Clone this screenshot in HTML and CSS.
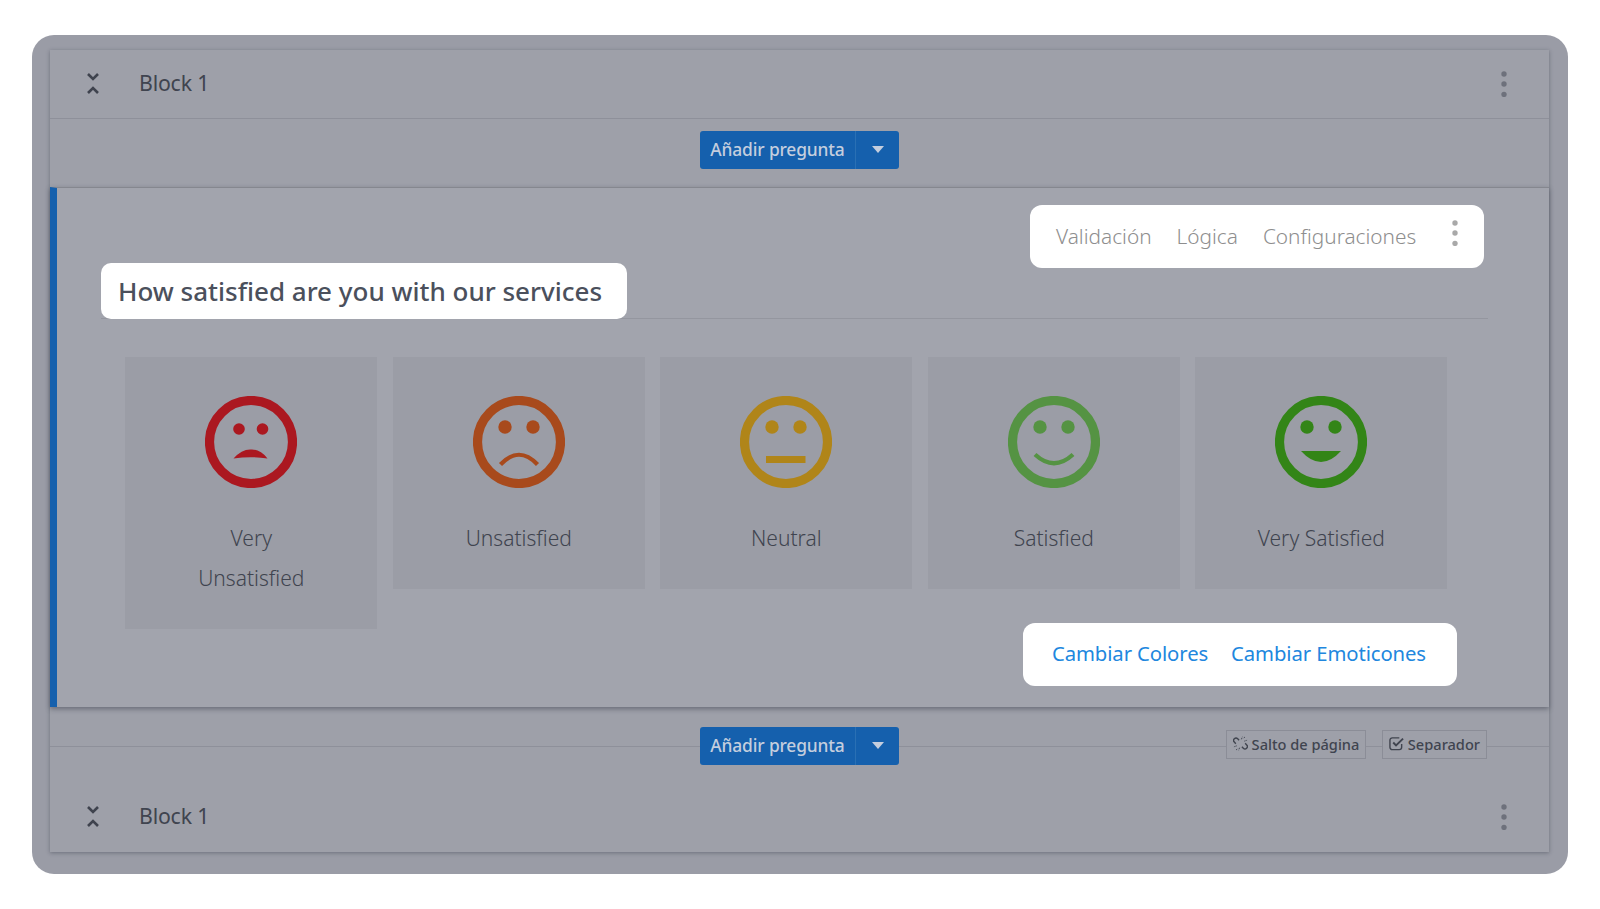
FILE: index.html
```html
<!DOCTYPE html>
<html lang="es">
<head>
<meta charset="utf-8">
<title>Block 1</title>
<link rel="stylesheet" href="styles.css">
</head>
<body>
<main class="frame">
  <section class="block">
    <header class="block-head">
      <svg class="collapse" viewBox="0 0 14 24"><path d="M2 2l5 5 5-5M2 21l5-5 5 5"/></svg>
      <span class="block-title">Block 1</span>
      <svg class="kebab" viewBox="0 0 6 26"><circle cx="3" cy="3" r="2.7"/><circle cx="3" cy="13" r="2.7"/><circle cx="3" cy="23.400" r="2.7"/></svg>
    </header>
    <div class="add-row add-top">
      <div class="split-btn"><span class="split-main">Añadir pregunta</span><span class="split-caret"></span></div>
    </div>
    <article class="question">
      <div class="actions-row">
        <nav class="actions">
          <span>Validación</span><span>Lógica</span><span>Configuraciones</span>
          <svg class="kebab kebab-light" viewBox="0 0 6 26"><circle cx="3" cy="3" r="2.7"/><circle cx="3" cy="13" r="2.7"/><circle cx="3" cy="23.400" r="2.7"/></svg>
        </nav>
      </div>
      <div class="title-row"><h2 class="q-title">How satisfied are you with our services</h2></div>
      <div class="faces">
        <div class="face-card">
          <svg class="face c1" viewBox="-46 -46 92 92"><circle class="ring" r="41.500"/><circle class="fill" cx="-12" cy="-13" r="5.800"/><circle class="fill" cx="11.500" cy="-13" r="5.800"/><path class="fill" d="M-17.500 16.500Q-9 7 0 7.500Q9 7 16.500 16.500Q0 14 -17.500 16.500Z"/></svg>
          <div class="face-label">Very<br>Unsatisfied</div>
        </div>
        <div class="face-card">
          <svg class="face c2" viewBox="-46 -46 92 92"><circle class="ring" r="41.500"/><circle class="fill" cx="-14" cy="-15" r="6.700"/><circle class="fill" cx="14" cy="-15" r="6.700"/><path class="line" d="M-18.500 22.500Q0 3 18.500 22.500"/></svg>
          <div class="face-label">Unsatisfied</div>
        </div>
        <div class="face-card">
          <svg class="face c3" viewBox="-46 -46 92 92"><circle class="ring" r="41.500"/><circle class="fill" cx="-14" cy="-15" r="6.700"/><circle class="fill" cx="14" cy="-15" r="6.700"/><rect class="fill" x="-20" y="14" width="39.500" height="7"/></svg>
          <div class="face-label">Neutral</div>
        </div>
        <div class="face-card">
          <svg class="face c4" viewBox="-46 -46 92 92"><circle class="ring" r="41.500"/><circle class="fill" cx="-14" cy="-15" r="6.700"/><circle class="fill" cx="14" cy="-15" r="6.700"/><path class="line" d="M-19 12.500Q0 30 19 12.500"/></svg>
          <div class="face-label">Satisfied</div>
        </div>
        <div class="face-card">
          <svg class="face c5" viewBox="-46 -46 92 92"><circle class="ring" r="41.500"/><circle class="fill" cx="-14" cy="-15" r="6.700"/><circle class="fill" cx="14" cy="-15" r="6.700"/><path class="fill" d="M-20 9H20Q10 20 0 20Q-10 20 -20 9Z"/></svg>
          <div class="face-label">Very Satisfied</div>
        </div>
      </div>
      <div class="change-row">
        <div class="change"><span>Cambiar Colores</span><span>Cambiar Emoticones</span></div>
      </div>
    </article>
    <div class="add-row add-bottom">
      <span></span>
      <div class="split-btn"><span class="split-main">Añadir pregunta</span><span class="split-caret"></span></div>
      <div class="tags">
        <span class="tag"><svg class="tag-icon" viewBox="0 0 16 16"><path d="M6.500 4.500L5 3a2.500 2.500 0 0 0-3.600 3.500L3 8.200M9.500 11.500L11 13a2.500 2.500 0 0 0 3.600-3.500L13 7.800"/><path class="spark" d="M9 3.500L10 .8M12 5.500l3-1M7 12.500L6 15.200M4 10.500l-3 1M11.500 2l1.500-1M4.500 14l-1.500 1"/></svg>Salto de página</span>
        <span class="tag"><svg class="tag-icon" viewBox="0 0 16 16"><path d="M13.500 8.500v3.500a2.500 2.500 0 0 1-2.500 2.500H3.500A2.500 2.500 0 0 1 1 12V4.500A2.500 2.500 0 0 1 3.500 2H11"/><path class="tick" d="M4.500 7l3 3L15 2.800"/></svg>Separador</span>
      </div>
    </div>
    <footer class="block-head block-foot">
      <svg class="collapse" viewBox="0 0 14 24"><path d="M2 2l5 5 5-5M2 21l5-5 5 5"/></svg>
      <span class="block-title">Block 1</span>
      <svg class="kebab" viewBox="0 0 6 26"><circle cx="3" cy="3" r="2.7"/><circle cx="3" cy="13" r="2.7"/><circle cx="3" cy="23.400" r="2.7"/></svg>
    </footer>
  </section>
</main>
</body>
</html>
```

FILE: styles.css
```css
* { box-sizing: border-box; }
html, body { margin: 0; height: 100%; }
body {
  background: #fff;
  padding: 35px 32px 35px;
  font-family: "Noto Sans", "Open Sans", sans-serif;
  color: #40444f;
  overflow: hidden;
}
.frame {
  height: 839px;
  background: #9a9ca6;
  border-radius: 22px;
  padding: 15px 19px 22px 18px;
}
.block {
  height: 802px;
  background: #9ea0a9;
  box-shadow: 0 1px 4px rgba(40, 44, 60, .4);
  display: flex;
  flex-direction: column;
}
.block-head {
  height: 69px;
  flex: none;
  display: flex;
  align-items: center;
  padding: 0 42px 1px 36px;
  border-bottom: 1px solid #8e909a;
}
.collapse {
  width: 14px;
  height: 24px;
  fill: none;
  stroke: #3f434e;
  stroke-width: 2.600;
  flex: none;
}
.block-title {
  font-size: 21.300px;
  line-height: 26px;
  letter-spacing: -.2px;
  margin-left: 39px;
  padding-bottom: 1px;
  flex: 1;
}
.kebab { width: 6px; height: 26px; fill: #6e717c; flex: none; }
.kebab-light { fill: #a9a9a9; }
.add-row { flex: none; }
.add-top {
  height: 68px;
  display: flex;
  justify-content: center;
  padding-top: 12px;
}
.split-btn {
  width: 199px;
  height: 38px;
  background: #1560ad;
  border-radius: 3px;
  display: flex;
  color: #c4cede;
  font-size: 17.400px;
  font-weight: 500;
}
.split-main {
  width: 156px;
  flex: none;
  text-align: center;
  line-height: 37px;
  letter-spacing: -.15px;
  border-right: 1px solid #2a70b4;
}
.split-caret {
  flex: 1;
  position: relative;
}
.split-caret::after {
  content: "";
  position: absolute;
  left: 16px;
  top: 15px;
  border: 6.500px solid transparent;
  border-bottom: 0;
  border-top: 7px solid #c4cede;
}
.question {
  height: 520px;
  flex: none;
  background: #a2a4ad;
  border-left: 7px solid #1560ad;
  border-top: 1px solid #85878f;
  box-shadow: 0 2px 5px rgba(40, 44, 60, .45);
  position: relative;
}
.actions-row {
  display: flex;
  justify-content: flex-end;
  padding: 17px 65px 0 0;
}
.actions {
  width: 454px;
  height: 63px;
  background: #fff;
  border-radius: 12px;
  display: flex;
  align-items: center;
  padding: 0 26px 2px;
  gap: 25px;
  color: #8e8e8e;
  font-size: 20.800px;
  font-weight: 300;
}
.actions .kebab { margin: -5px 0 0 11px; }
.title-row {
  margin: -5px 61px 0 44px;
  border-bottom: 1px solid #94969f;
  height: 56px;
  position: relative;
}
.q-title {
  margin: 0;
  width: 526px;
  height: 56px;
  background: #fff;
  border-radius: 10px;
  padding-left: 17px;
  font-size: 26px;
  line-height: 56px;
  font-weight: 500;
  color: #4b505c;
  white-space: nowrap;
}
.faces {
  display: grid;
  grid-template-columns: repeat(5, 252px);
  column-gap: 15.500px;
  align-items: start;
  padding: 38px 0 0 68.300px;
}
.face-card {
  background: #9b9da6;
  padding: 39px 0 31px;
  text-align: center;
}
.face {
  display: block;
  width: 92px;
  height: 92px;
  margin: 0 auto;
}
.ring { fill: none; stroke-width: 9.200; }
.line { fill: none; stroke-width: 4.200; }
.c1 .ring, .c1 .line { stroke: #ab1820; } .c1 .fill { fill: #ab1820; }
.c2 .ring, .c2 .line { stroke: #a84a1c; } .c2 .fill { fill: #a84a1c; }
.c3 .ring, .c3 .line { stroke: #b08519; } .c3 .fill { fill: #b08519; }
.c4 .ring, .c4 .line { stroke: #559343; } .c4 .fill { fill: #559343; }
.c5 .ring, .c5 .line { stroke: #338517; } .c5 .fill { fill: #338517; }
.face-label {
  margin-top: 30px;
  font-size: 21px;
  font-weight: 300;
  line-height: 40px;
  color: #40444f;
}
.change-row {
  position: absolute;
  right: 92px;
  top: 435px;
}
.change {
  width: 434px;
  height: 63px;
  background: #fff;
  border-radius: 12px;
  display: flex;
  align-items: center;
  gap: 23px;
  padding: 0 0 3px 29px;
  color: #2187de;
  font-size: 20.300px;
  letter-spacing: -.1px;
  white-space: nowrap;
}
.add-bottom {
  height: 77px;
  display: grid;
  grid-template-columns: 1fr 199px 1fr;
  padding-top: 20px;
  position: relative;
}
.add-bottom::before {
  content: "";
  position: absolute;
  left: 0;
  right: 0;
  top: 39px;
  border-top: 1px solid #8e909a;
}
.add-bottom .split-btn { position: relative; }
.tags {
  display: flex;
  justify-content: flex-end;
  align-items: flex-start;
  gap: 15.500px;
  padding: 3px 62px 0 0;
  position: relative;
}
.tag {
  height: 29px;
  display: flex;
  align-items: center;
  gap: 4px;
  padding: 0 6px 2px;
  background: #9ea0a9;
  border: 1px solid #8b8d97;
  font-size: 14.600px;
  font-weight: 500;
  color: #40444f;
  white-space: nowrap;
}
.tag-icon {
  width: 15px;
  height: 15px;
  fill: none;
  stroke: #40444f;
  stroke-width: 1.500;
  flex: none;
}
.tag-icon .tick { stroke-width: 2.100; }
.tag-icon .spark { stroke-width: 1; stroke-dasharray: 1.500 .8; }
.block-foot {
  border-bottom: 0;
  height: 68px;
  padding-bottom: 3px;
}
```
